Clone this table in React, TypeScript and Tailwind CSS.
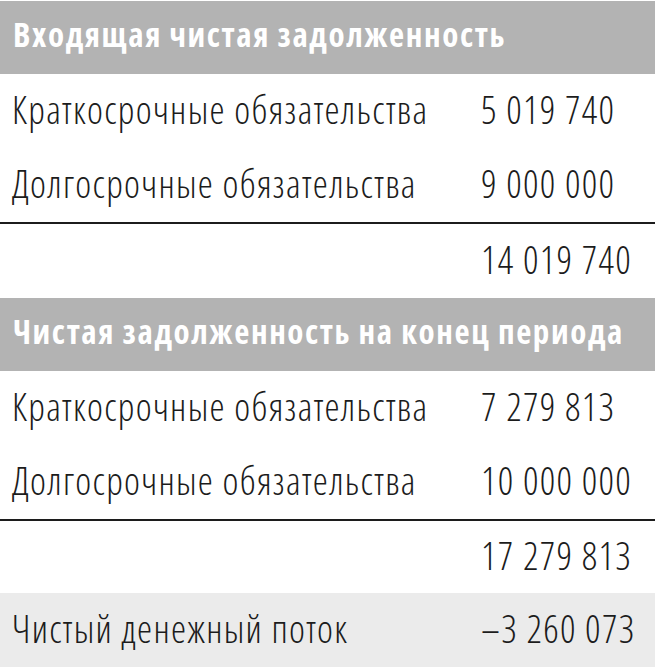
type Row = { label?: string; value: string };

const Header = ({ title }: { title: string }) => (
  <div className="flex h-[73px] items-center bg-[#b3b3b3] pb-[5px] pl-[13px] text-[33px] font-bold tracking-[1.6px] text-white">
    {title}
  </div>
);

const Line = ({ label, value }: Row) => (
  <div className="flex h-[74px] items-center pb-[4px]">
    <div className="w-[481px] shrink-0 pl-[12px]">{label}</div>
    <div>{value}</div>
  </div>
);

export default function App() {
  return (
    <div className="w-[655px] bg-white pt-px font-['Open_Sans',sans-serif] text-[38px] font-light tracking-[1.3px] text-[#1c1c1c] font-stretch-condensed whitespace-nowrap">
      <Header title="Входящая чистая задолженность" />
      <Line label="Краткосрочные обязательства" value="5 019 740" />
      <Line label="Долгосрочные обязательства" value="9 000 000" />
      <div className="h-[2px] bg-[#1c1c1c]" />
      <Line value="14 019 740" />
      <Header title="Чистая задолженность на конец периода" />
      <Line label="Краткосрочные обязательства" value="7 279 813" />
      <Line label="Долгосрочные обязательства" value="10 000 000" />
      <div className="h-[2px] bg-[#1c1c1c]" />
      <div className="flex h-[72px] items-center pb-[4px]">
        <div className="w-[481px] shrink-0" />
        <div>17 279 813</div>
      </div>
      <div className="flex h-[75px] items-center bg-[#ebebeb] pb-[4px]">
        <div className="w-[481px] shrink-0 pl-[12px]">Чистый денежный поток</div>
        <div>–3 260 073</div>
      </div>
    </div>
  );
}
